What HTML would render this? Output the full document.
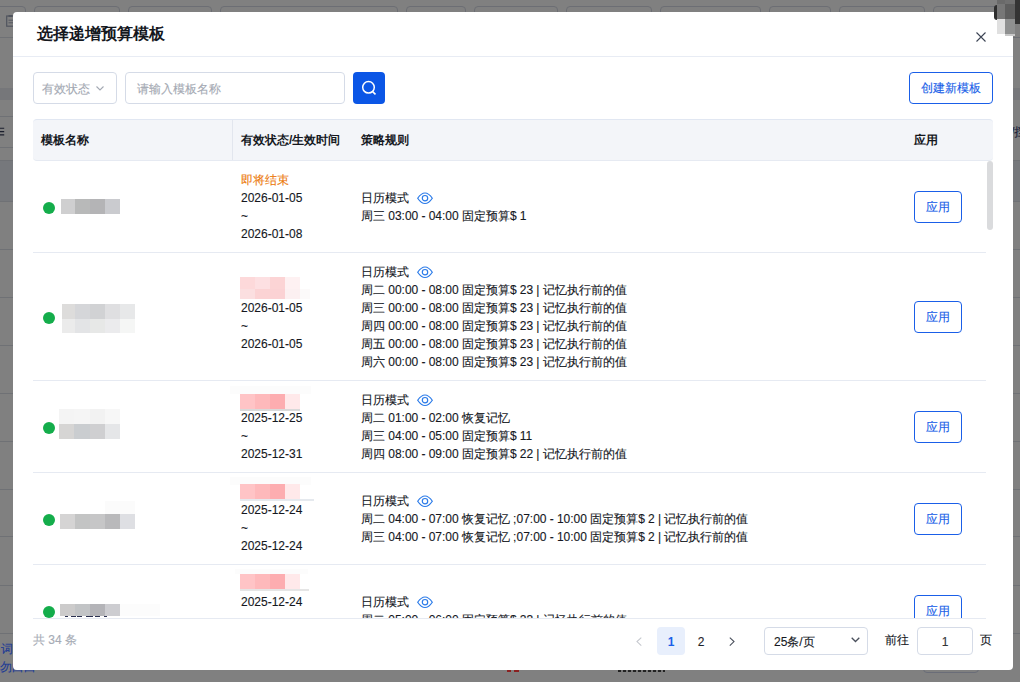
<!DOCTYPE html>
<html><head><meta charset="utf-8">
<style>
*{box-sizing:border-box;margin:0;padding:0}
html,body{width:1020px;height:682px;overflow:hidden}
body{position:relative;-webkit-text-stroke:0.12px currentColor;background:#808080;font-family:"Liberation Sans",sans-serif;font-size:12px;color:#15181e}
.a{position:absolute}
.bgbox{position:absolute;top:6px;height:32px;border:1px solid #6c6e74;border-radius:4px}
.hl{position:absolute;left:0;width:1020px;height:1px;background:#6f7175}
.modal{position:absolute;left:13px;top:12px;width:1000px;height:658px;background:#fff;border-radius:4px;overflow:hidden}
.t{position:absolute;white-space:nowrap;line-height:18px;margin-top:1px;word-spacing:-0.12px}
.b{font-weight:bold;-webkit-text-stroke:0}
.btn{position:absolute;border:1px solid #1a5fe8;border-radius:4px;color:#1a5fe8;text-align:center}
.px{position:absolute}
.dot{position:absolute;width:12px;height:12px;border-radius:50%;background:#14ad4b}
.row-line{position:absolute;left:20px;width:953px;height:1px;background:#e6eaf2}
.eye{position:absolute;width:18px;height:14px}
</style></head>
<body>
<!-- background page -->
<div class="bgbox" style="left:-10px;width:36px"></div>
<div class="bgbox" style="left:34px;width:86px"></div>
<div class="bgbox" style="left:128px;width:84px"></div>
<div class="bgbox" style="left:220px;width:178px"></div>
<div class="bgbox" style="left:406px;width:60px"></div>
<div class="bgbox" style="left:474px;width:84px"></div>
<div class="bgbox" style="left:566px;width:86px"></div>
<div class="bgbox" style="left:660px;width:101px"></div>
<div class="bgbox" style="left:769px;width:62px"></div>
<div class="bgbox" style="left:839px;width:86px"></div>
<div class="bgbox" style="left:933px;width:80px"></div>
<div class="hl" style="top:37px"></div>
<svg class="a" style="left:6px;top:14px" width="9" height="13" viewBox="0 0 9 13"><rect x="0.7" y="2" width="7.5" height="10.2" fill="none" stroke="#50545e" stroke-width="1.2"/><rect x="2.5" y="1" width="4" height="2" fill="#50545e"/><path d="M2.5 6.2H7M2.5 8.8H7" stroke="#50545e" stroke-width="0.9"/></svg>
<svg class="a" style="left:0;top:127px" width="6" height="9" viewBox="0 0 6 9"><path d="M0 1.3H4.2M0 4.6H4.2M0 7.9H4.2" stroke="#1a1e2c" stroke-width="1.1"/></svg>
<div class="t" style="left:1px;top:639px;color:#1c3a96">词</div>
<div class="t" style="left:0px;top:657px;color:#1c3a96">勿白白</div>

<div class="a" style="left:0;top:88px;width:1020px;height:12px;background:#76777a"></div>
<div class="hl" style="top:116px;width:13px"></div>
<div class="hl" style="top:147px;width:13px"></div>
<div class="hl" style="top:160px"></div>
<div class="a" style="left:0;top:161px;width:1020px;height:40px;background:#76787c"></div>
<div class="t" style="left:1011px;top:122px;color:#1a1f3a">/挡</div>
<div class="hl" style="top:201px"></div>
<div class="hl" style="top:249px"></div>
<div class="hl" style="top:297px"></div>
<div class="hl" style="top:345px"></div>
<div class="hl" style="top:393px"></div>
<div class="hl" style="top:441px"></div>
<div class="hl" style="top:489px"></div>
<div class="hl" style="top:536px"></div>
<div class="hl" style="top:585px"></div>
<div class="hl" style="top:633px"></div>

<div class="a" style="left:923px;top:655px;width:56px;height:18px;border:1px solid #6a6d78;border-radius:4px"></div>
<div class="a" style="left:507px;top:670px;width:4px;height:2px;background:#8a2020"></div>
<div class="a" style="left:514px;top:670px;width:5px;height:2px;background:#8a2020"></div>
<div class="a" style="left:618px;top:670px;width:47px;height:2px;background:repeating-linear-gradient(90deg,#222 0 3px,#777 3px 5px)"></div>
<div class="modal">
  <div class="t b" style="left:24px;top:9.5px;font-size:16px;line-height:22px;color:#15181e">选择递增预算模板</div>
  <svg class="a" style="left:963px;top:20px" width="10" height="10" viewBox="0 0 10 10"><path d="M0.5 0.5L9.5 9.5M9.5 0.5L0.5 9.5" stroke="#3c4454" stroke-width="1.1"/></svg>
  <div class="a" style="left:0;top:44px;width:1000px;height:1px;background:#e8ecf4"></div>

  <!-- filters -->
  <div class="a" style="left:20px;top:60px;width:84px;height:32px;border:1px solid #d5dbe7;border-radius:4px"></div>
  <div class="t" style="left:29px;top:67px;color:#a4a9b3">有效状态</div>
  <svg class="a" style="left:83px;top:74px" width="8" height="5" viewBox="0 0 8 5"><path d="M0.5 0.5L4 4L7.5 0.5" fill="none" stroke="#a4a9b3" stroke-width="1.1"/></svg>
  <div class="a" style="left:112px;top:60px;width:220px;height:32px;border:1px solid #d5dbe7;border-radius:4px"></div>
  <div class="t" style="left:124px;top:67px;color:#a4a9b3">请输入模板名称</div>
  <div class="a" style="left:340px;top:60px;width:32px;height:32px;background:#0b56e6;border-radius:4px"></div>
  <svg class="a" style="left:348px;top:68px" width="16" height="16" viewBox="0 0 16 16"><circle cx="7.5" cy="7.3" r="5.8" fill="none" stroke="#fff" stroke-width="1.5"/><path d="M11.6 11.6L14.5 14.4" stroke="#fff" stroke-width="1.5"/></svg>
  <div class="btn" style="left:896px;top:60px;width:84px;height:32px;line-height:30px">创建新模板</div>

  <!-- table header -->
  <div class="a" style="left:20px;top:107px;width:960px;height:42px;background:#f3f5f9;border-top:1px solid #e1e7f2;border-bottom:1px solid #e6eaf2;border-radius:4px"></div>
  <div class="a" style="left:219px;top:108px;width:1px;height:40px;background:#e2e6ee"></div>
  <div class="t b" style="left:28px;top:118px">模板名称</div>
  <div class="t b" style="left:228px;top:118px">有效状态/生效时间</div>
  <div class="t b" style="left:348px;top:118px">策略规则</div>
  <div class="t b" style="left:901px;top:118px">应用</div>

  <!-- body -->
  <div class="a" style="left:0;top:148px;width:1000px;height:458px;overflow:hidden">
    <!-- scrollbar -->
    <div class="a" style="left:974px;top:1px;width:6px;height:69px;background:#dadbdd;border-radius:3px"></div>

<!--ROWS-->
<div class="dot" style="left:30px;top:42px"></div>
<div class="px" style="left:48px;top:39px;width:14px;height:15px;background:#cfcfd0"></div>
<div class="px" style="left:62px;top:39px;width:15px;height:15px;background:#b8b9b9"></div>
<div class="px" style="left:77px;top:39px;width:15px;height:15px;background:#b4b4b6"></div>
<div class="px" style="left:92px;top:39px;width:15px;height:15px;background:#cacbcf"></div>
<div class="t" style="left:228px;top:10px;color:#ec7a0c">即将结束</div>
<div class="t" style="left:228px;top:28px;">2026-01-05</div>
<div class="t" style="left:228px;top:46px;">~</div>
<div class="t" style="left:228px;top:64px;">2026-01-08</div>
<div class="t" style="left:348px;top:28px;">日历模式</div>
<svg class="eye" style="left:403px;top:31px" width="18" height="14" viewBox="0 0 18 14"><path d="M1.7 7.25C4.3 3.4 6.6 2 9 2C11.4 2 13.7 3.4 16.3 7.25C13.7 11.1 11.4 12.5 9 12.5C6.6 12.5 4.3 11.1 1.7 7.25Z" fill="none" stroke="#2b7be9" stroke-width="1.2"/><circle cx="9" cy="7.2" r="2.7" fill="none" stroke="#2b7be9" stroke-width="1.2"/></svg>
<div class="t" style="left:348px;top:46px;">周三 03:00 - 04:00 固定预算$ 1</div>
<div class="btn" style="left:901px;top:31px;width:48px;height:32px;line-height:30px">应用</div>
<div class="row-line" style="top:92px"></div>
<div class="dot" style="left:30px;top:152px"></div>
<div class="px" style="left:49px;top:144px;width:13px;height:15px;background:#dddcdb"></div>
<div class="px" style="left:49px;top:159px;width:13px;height:14px;background:#ebebeb"></div>
<div class="px" style="left:62px;top:144px;width:15px;height:15px;background:#d5d6d9"></div>
<div class="px" style="left:62px;top:159px;width:15px;height:14px;background:#e3e4e6"></div>
<div class="px" style="left:77px;top:144px;width:15px;height:15px;background:#d1d2d4"></div>
<div class="px" style="left:77px;top:159px;width:15px;height:14px;background:#e7e8e7"></div>
<div class="px" style="left:92px;top:144px;width:15px;height:15px;background:#dfdfe1"></div>
<div class="px" style="left:92px;top:159px;width:15px;height:14px;background:#ebebed"></div>
<div class="px" style="left:107px;top:144px;width:15px;height:15px;background:#e7e8e9"></div>
<div class="px" style="left:107px;top:159px;width:15px;height:14px;background:#f5f6f5"></div>

<div class="px" style="left:227px;top:117px;width:15px;height:12px;background:#fdd9da"></div>
<div class="px" style="left:242px;top:117px;width:15px;height:12px;background:#fde0e2"></div>
<div class="px" style="left:257px;top:117px;width:15px;height:12px;background:#fcd4d5"></div>
<div class="px" style="left:272px;top:117px;width:15px;height:12px;background:#fef1f2"></div>
<div class="px" style="left:227px;top:129px;width:15px;height:10px;background:#fbdfe0"></div>
<div class="px" style="left:242px;top:129px;width:15px;height:10px;background:#fbd3d4"></div>
<div class="px" style="left:257px;top:129px;width:15px;height:10px;background:#fbd2d4"></div>
<div class="px" style="left:272px;top:129px;width:15px;height:10px;background:#fcf0f1"></div>
<div class="px" style="left:287px;top:129px;width:10px;height:10px;background:#fcfafa"></div>
<div class="t" style="left:228px;top:138px;">2026-01-05</div>
<div class="t" style="left:228px;top:156px;">~</div>
<div class="t" style="left:228px;top:174px;">2026-01-05</div>
<div class="t" style="left:348px;top:102px;">日历模式</div>
<svg class="eye" style="left:403px;top:105px" width="18" height="14" viewBox="0 0 18 14"><path d="M1.7 7.25C4.3 3.4 6.6 2 9 2C11.4 2 13.7 3.4 16.3 7.25C13.7 11.1 11.4 12.5 9 12.5C6.6 12.5 4.3 11.1 1.7 7.25Z" fill="none" stroke="#2b7be9" stroke-width="1.2"/><circle cx="9" cy="7.2" r="2.7" fill="none" stroke="#2b7be9" stroke-width="1.2"/></svg>
<div class="t" style="left:348px;top:120px;">周二 00:00 - 08:00 固定预算$ 23 | 记忆执行前的值</div>
<div class="t" style="left:348px;top:138px;">周三 00:00 - 08:00 固定预算$ 23 | 记忆执行前的值</div>
<div class="t" style="left:348px;top:156px;">周四 00:00 - 08:00 固定预算$ 23 | 记忆执行前的值</div>
<div class="t" style="left:348px;top:174px;">周五 00:00 - 08:00 固定预算$ 23 | 记忆执行前的值</div>
<div class="t" style="left:348px;top:192px;">周六 00:00 - 08:00 固定预算$ 23 | 记忆执行前的值</div>
<div class="btn" style="left:901px;top:141px;width:48px;height:32px;line-height:30px">应用</div>
<div class="row-line" style="top:220px"></div>
<div class="dot" style="left:30px;top:262px"></div>
<div class="px" style="left:46.0px;top:248.5px;width:15.3px;height:15.3px;background:#f4f4f4"></div>
<div class="px" style="left:61.3px;top:248.5px;width:15.3px;height:15.3px;background:#f5f5f5"></div>
<div class="px" style="left:76.6px;top:248.5px;width:15.3px;height:15.3px;background:#f2f2f2"></div>
<div class="px" style="left:91.9px;top:248.5px;width:15.3px;height:15.3px;background:#f7f7f7"></div>
<div class="px" style="left:46.0px;top:263.8px;width:15.3px;height:15px;background:#d6d5d4"></div>
<div class="px" style="left:61.3px;top:263.8px;width:15.3px;height:15px;background:#cacdd0"></div>
<div class="px" style="left:76.6px;top:263.8px;width:15.3px;height:15px;background:#cfcfd1"></div>
<div class="px" style="left:91.9px;top:263.8px;width:15.3px;height:15px;background:#e5e6e8"></div>
<div class="px" style="left:217px;top:225.5px;width:81px;height:8px;background:#fcfcfc"></div>
<div class="px" style="left:227px;top:233.8px;width:15px;height:15.2px;background:#ffc4c6"></div>
<div class="px" style="left:242px;top:233.8px;width:15px;height:15.2px;background:#feb9bb"></div>
<div class="px" style="left:257px;top:233.8px;width:15px;height:15.2px;background:#fdadb0"></div>
<div class="px" style="left:272px;top:233.8px;width:15px;height:15.2px;background:#ffe9ea"></div>
<div class="px" style="left:227px;top:249px;width:60px;height:2px;background:#d9d9d9"></div>
<div class="t" style="left:228px;top:248px;">2025-12-25</div>
<div class="t" style="left:228px;top:266px;">~</div>
<div class="t" style="left:228px;top:284px;">2025-12-31</div>
<div class="t" style="left:348px;top:230px;">日历模式</div>
<svg class="eye" style="left:403px;top:233px" width="18" height="14" viewBox="0 0 18 14"><path d="M1.7 7.25C4.3 3.4 6.6 2 9 2C11.4 2 13.7 3.4 16.3 7.25C13.7 11.1 11.4 12.5 9 12.5C6.6 12.5 4.3 11.1 1.7 7.25Z" fill="none" stroke="#2b7be9" stroke-width="1.2"/><circle cx="9" cy="7.2" r="2.7" fill="none" stroke="#2b7be9" stroke-width="1.2"/></svg>
<div class="t" style="left:348px;top:248px;">周二 01:00 - 02:00 恢复记忆</div>
<div class="t" style="left:348px;top:266px;">周三 04:00 - 05:00 固定预算$ 11</div>
<div class="t" style="left:348px;top:284px;">周四 08:00 - 09:00 固定预算$ 22 | 记忆执行前的值</div>
<div class="btn" style="left:901px;top:251px;width:48px;height:32px;line-height:30px">应用</div>
<div class="row-line" style="top:312px"></div>
<div class="dot" style="left:30px;top:354px"></div>
<div class="px" style="left:92px;top:341px;width:30px;height:13px;background:#fbfbfb"></div>
<div class="px" style="left:47px;top:353.7px;width:15px;height:15.3px;background:#d5d4d4"></div>
<div class="px" style="left:62px;top:353.7px;width:15px;height:15.3px;background:#c3c4c4"></div>
<div class="px" style="left:77px;top:353.7px;width:15px;height:15.3px;background:#c6c6c7"></div>
<div class="px" style="left:92px;top:353.7px;width:15px;height:15.3px;background:#b9b9bb"></div>
<div class="px" style="left:107px;top:353.7px;width:15px;height:15.3px;background:#dedfe3"></div>
<div class="px" style="left:217px;top:316.5px;width:81px;height:8px;background:#fcfcfc"></div>
<div class="px" style="left:227px;top:324.3px;width:15px;height:14.7px;background:#ffc4c6"></div>
<div class="px" style="left:242px;top:324.3px;width:15px;height:14.7px;background:#feb9bb"></div>
<div class="px" style="left:257px;top:324.3px;width:15px;height:14.7px;background:#fdadb0"></div>
<div class="px" style="left:272px;top:324.3px;width:15px;height:14.7px;background:#ffe9ea"></div>
<div class="px" style="left:227px;top:339px;width:74px;height:2px;background:#e5e9ee"></div>
<div class="t" style="left:228px;top:340px;">2025-12-24</div>
<div class="t" style="left:228px;top:358px;">~</div>
<div class="t" style="left:228px;top:376px;">2025-12-24</div>
<div class="t" style="left:348px;top:331px;">日历模式</div>
<svg class="eye" style="left:403px;top:334px" width="18" height="14" viewBox="0 0 18 14"><path d="M1.7 7.25C4.3 3.4 6.6 2 9 2C11.4 2 13.7 3.4 16.3 7.25C13.7 11.1 11.4 12.5 9 12.5C6.6 12.5 4.3 11.1 1.7 7.25Z" fill="none" stroke="#2b7be9" stroke-width="1.2"/><circle cx="9" cy="7.2" r="2.7" fill="none" stroke="#2b7be9" stroke-width="1.2"/></svg>
<div class="t" style="left:348px;top:349px;">周二 04:00 - 07:00 恢复记忆 ;07:00 - 10:00 固定预算$ 2 | 记忆执行前的值</div>
<div class="t" style="left:348px;top:367px;">周三 04:00 - 07:00 恢复记忆 ;07:00 - 10:00 固定预算$ 2 | 记忆执行前的值</div>
<div class="btn" style="left:901px;top:343px;width:48px;height:32px;line-height:30px">应用</div>
<div class="row-line" style="top:404px"></div>
<div class="dot" style="left:30px;top:446px"></div>
<div class="px" style="left:51.5px;top:456px;width:3.5px;height:1.2px;background:#2a3050"></div><div class="px" style="left:58.1px;top:456px;width:4.9px;height:1.2px;background:#2a3050"></div><div class="px" style="left:64.3px;top:456px;width:4.9px;height:1.2px;background:#2a3050"></div><div class="px" style="left:72.7px;top:456px;width:7.5px;height:1.2px;background:#2a3050"></div><div class="px" style="left:81.9px;top:456px;width:5.3px;height:1.2px;background:#2a3050"></div><div class="px" style="left:90.8px;top:456px;width:3.5px;height:1.2px;background:#2a3050"></div>
<div class="px" style="left:47px;top:443.8px;width:15px;height:11.8px;background:#cccbcb"></div>
<div class="px" style="left:62px;top:443.8px;width:15px;height:11.8px;background:#c2c4c6"></div>
<div class="px" style="left:77px;top:443.8px;width:15px;height:11.8px;background:#b4b4b8"></div>
<div class="px" style="left:92px;top:443.8px;width:15px;height:11.8px;background:#cdcdd1"></div>
<div class="px" style="left:107px;top:443.8px;width:40px;height:11.8px;background:#fcfcfc"></div>
<div class="px" style="left:222px;top:408.5px;width:73px;height:5.5px;background:#fcfcfc"></div>
<div class="px" style="left:227px;top:413.8px;width:15px;height:15.2px;background:#ffc4c6"></div>
<div class="px" style="left:242px;top:413.8px;width:15px;height:15.2px;background:#feb9bb"></div>
<div class="px" style="left:257px;top:413.8px;width:15px;height:15.2px;background:#fdadb0"></div>
<div class="px" style="left:272px;top:413.8px;width:15px;height:15.2px;background:#ffe9ea"></div>
<div class="px" style="left:227px;top:429px;width:69px;height:2px;background:#e5e5e5"></div>
<div class="t" style="left:228px;top:432px;">2025-12-24</div>
<div class="t" style="left:348px;top:432px;">日历模式</div>
<svg class="eye" style="left:403px;top:435px" width="18" height="14" viewBox="0 0 18 14"><path d="M1.7 7.25C4.3 3.4 6.6 2 9 2C11.4 2 13.7 3.4 16.3 7.25C13.7 11.1 11.4 12.5 9 12.5C6.6 12.5 4.3 11.1 1.7 7.25Z" fill="none" stroke="#2b7be9" stroke-width="1.2"/><circle cx="9" cy="7.2" r="2.7" fill="none" stroke="#2b7be9" stroke-width="1.2"/></svg>
<div class="t" style="left:348px;top:450px;">周二 05:00 - 06:00 固定预算$ 23 | 记忆执行前的值</div>
<div class="btn" style="left:901px;top:435px;width:48px;height:32px;line-height:30px">应用</div>
<!--/ROWS-->
  </div>

  <!-- footer -->
  <div class="a" style="left:20px;top:606px;width:953px;height:1px;background:#e6eaf2"></div>
  <div class="t" style="left:20px;top:618px;color:#a6abb5">共 34 条</div>
  <svg class="a" style="left:623px;top:625px" width="6" height="9" viewBox="0 0 6 9"><path d="M5.3 0.6L1 4.6L5.3 8.6" fill="none" stroke="#c5c8ce" stroke-width="1.1"/></svg>
  <div class="a" style="left:644px;top:615px;width:28px;height:28px;background:#e8effc;border-radius:4px"></div>
  <div class="t b" style="left:644px;top:620px;width:28px;text-align:center;color:#1a5fe8;font-size:12px">1</div>
  <div class="t" style="left:674px;top:620px;width:28px;text-align:center;color:#1f2329;font-size:12px">2</div>
  <svg class="a" style="left:716px;top:625px" width="6" height="9" viewBox="0 0 6 9"><path d="M0.8 0.6L5 4.6L0.8 8.6" fill="none" stroke="#4a505c" stroke-width="1.1"/></svg>
  <div class="a" style="left:751px;top:615px;width:104px;height:28px;border:1px solid #d5dbe7;border-radius:4px"></div>
  <div class="t" style="left:761px;top:620px;font-size:12px">25条/页</div>
  <svg class="a" style="left:838px;top:625px" width="9" height="6" viewBox="0 0 9 6"><path d="M0.7 0.7L4.5 4.5L8.3 0.7" fill="none" stroke="#4a505c" stroke-width="1.3"/></svg>
  <div class="t" style="left:872px;top:618px">前往</div>
  <div class="a" style="left:904px;top:615px;width:56px;height:28px;border:1px solid #d5dbe7;border-radius:4px"></div>
  <div class="t" style="left:904px;top:620px;width:56px;text-align:center;font-size:12px;color:#333">1</div>
  <div class="t" style="left:967px;top:618px">页</div>
</div>
<!-- avatar --><div class="a" style="left:0;top:0;width:1020px;height:40px;z-index:5">
<div class="a" style="left:985px;top:6px;width:10px;height:1px;background:#6c6e74"></div>
<div class="a" style="left:997px;top:0;width:8px;height:4px;background:#6a6a6a"></div>
<div class="a" style="left:1005px;top:0;width:10px;height:4px;background:#707070"></div>
<div class="a" style="left:997px;top:4px;width:8px;height:15px;background:#777"></div>
<div class="a" style="left:1005px;top:4px;width:10px;height:15px;background:#5e5e5e"></div>
<div class="a" style="left:1015px;top:0;width:5px;height:24px;background:#343434"></div>
<div class="a" style="left:997px;top:19px;width:8px;height:15px;background:#e0e0e0"></div>
<div class="a" style="left:1005px;top:19px;width:10px;height:15px;background:#8f9090"></div>
<div class="a" style="left:1005px;top:34px;width:10px;height:2px;background:#c8c8c8"></div>
<div class="a" style="left:1013px;top:37px;width:7px;height:1px;background:#6c6e74"></div>
<div class="a" style="left:994px;top:5px;width:3px;height:15px;background:#2e2e2e;border-radius:3px 0 0 3px"></div></div>
</body></html>
